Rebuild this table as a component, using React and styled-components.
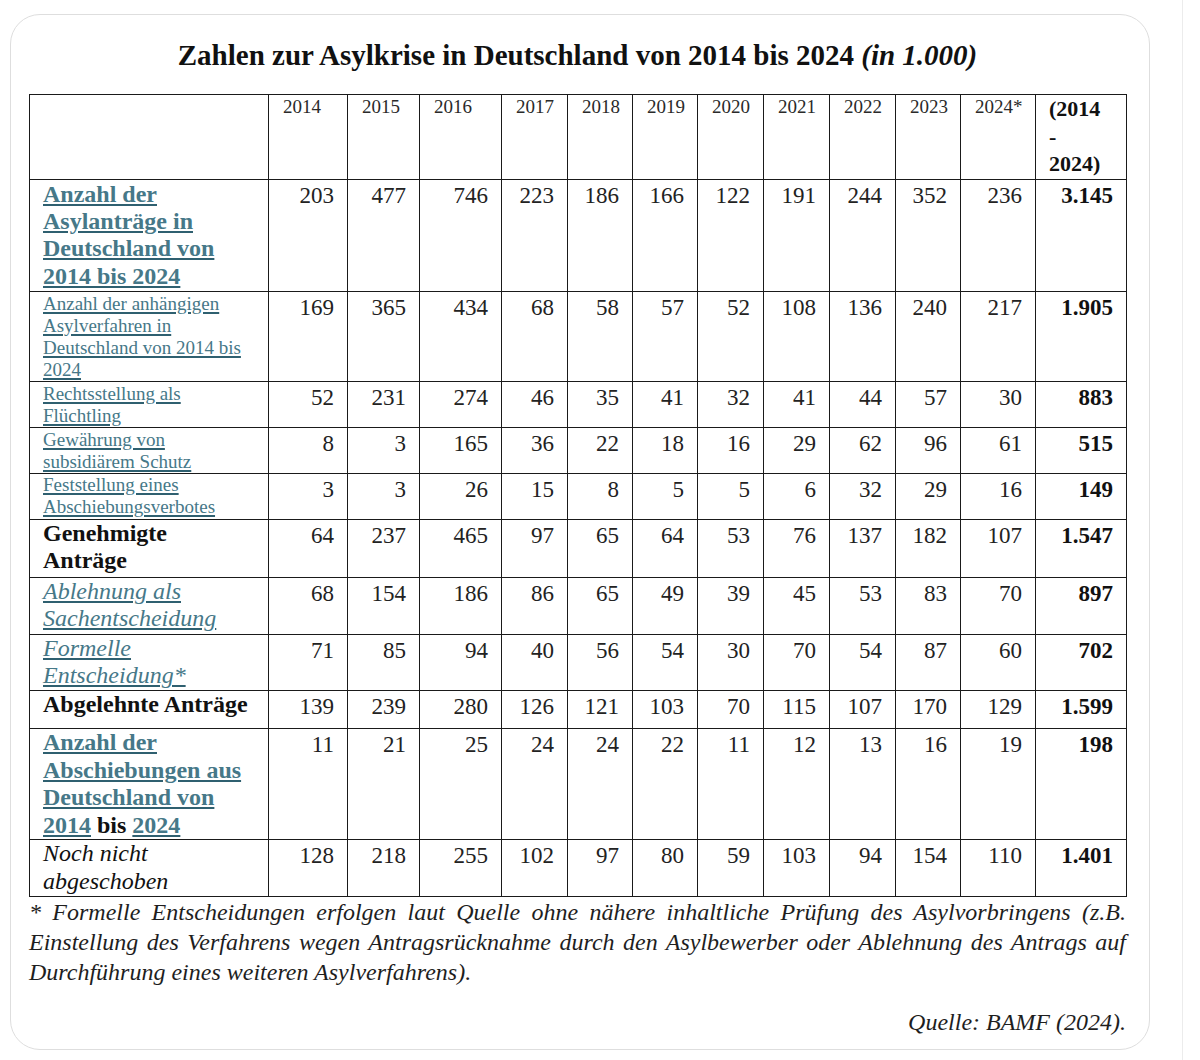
import styled, { createGlobalStyle } from "styled-components";

const GlobalStyle = createGlobalStyle`
  html, body {
    margin: 0;
    padding: 0;
    background: #ffffff;
  }
  body {
    font-family: "Liberation Serif", "Times New Roman", serif;
    color: #1a1a1a;
  }
`;

const years = ["2014", "2015", "2016", "2017", "2018", "2019", "2020", "2021", "2022", "2023", "2024*"];

const colWidths = [239, 79, 72, 82, 66, 65, 65, 66, 66, 66, 65, 75, 91];

const rows = [
  {
    kind: "main",
    h: 112,
    label: "Anzahl der Asylanträge in Deutschland von 2014 bis 2024",
    values: [203, 477, 746, 223, 186, 166, 122, 191, 244, 352, 236],
    total: "3.145",
  },
  {
    kind: "sub",
    h: 90,
    label: "Anzahl der anhängigen Asylverfahren in Deutschland von 2014 bis 2024",
    values: [169, 365, 434, 68, 58, 57, 52, 108, 136, 240, 217],
    total: "1.905",
  },
  {
    kind: "sub",
    h: 46,
    label: "Rechtsstellung als Flüchtling",
    values: [52, 231, 274, 46, 35, 41, 32, 41, 44, 57, 30],
    total: "883",
  },
  {
    kind: "sub",
    h: 45,
    label: "Gewährung von subsidiärem Schutz",
    values: [8, 3, 165, 36, 22, 18, 16, 29, 62, 96, 61],
    total: "515",
  },
  {
    kind: "sub",
    h: 46,
    label: "Feststellung eines Abschiebungsverbotes",
    values: [3, 3, 26, 15, 8, 5, 5, 6, 32, 29, 16],
    total: "149",
  },
  {
    kind: "sum",
    h: 58,
    label: "Genehmigte Anträge",
    values: [64, 237, 465, 97, 65, 64, 53, 76, 137, 182, 107],
    total: "1.547",
  },
  {
    kind: "italicLink",
    h: 57,
    label: "Ablehnung als Sachentscheidung",
    values: [68, 154, 186, 86, 65, 49, 39, 45, 53, 83, 70],
    total: "897",
  },
  {
    kind: "italicLink",
    h: 56,
    label: "Formelle Entscheidung*",
    values: [71, 85, 94, 40, 56, 54, 30, 70, 54, 87, 60],
    total: "702",
  },
  {
    kind: "sum",
    h: 38,
    label: "Abgelehnte Anträge",
    values: [139, 239, 280, 126, 121, 103, 70, 115, 107, 170, 129],
    total: "1.599",
  },
  {
    kind: "deport",
    h: 111,
    label: null,
    values: [11, 21, 25, 24, 24, 22, 11, 12, 13, 16, 19],
    total: "198",
  },
  {
    kind: "italic",
    h: 57,
    label: "Noch nicht abgeschoben",
    values: [128, 218, 255, 102, 97, 80, 59, 103, 94, 154, 110],
    total: "1.401",
  },
];

const App = () => {
  return (
    <>
      <GlobalStyle />
      <Page>
        <Card>
          <Title>
            Zahlen zur Asylkrise in Deutschland von 2014 bis 2024 <em>(in 1.000)</em>
          </Title>

          <Table>
            <colgroup>
              {colWidths.map((w, i) => (
                <col key={i} style={{ width: w }} />
              ))}
            </colgroup>
            <thead>
              <Row $h={85}>
                <HeadCell />
                {years.map((y) => (
                  <HeadCell key={y}>{y}</HeadCell>
                ))}
                <TotalHead>
                  (2014
                  <br />-<br />
                  2024)
                </TotalHead>
              </Row>
            </thead>
            <tbody>
              {rows.map((row, i) => (
                <Row key={i} $h={row.h}>
                  <LabelCell $kind={row.kind}>
                    {row.kind === "deport" ? (
                      <>
                        <LinkText>Anzahl der Abschiebungen aus Deutschland von 2014</LinkText>
                        {" bis "}
                        <LinkText>2024</LinkText>
                      </>
                    ) : row.kind === "sum" || row.kind === "italic" ? (
                      row.label
                    ) : (
                      <LinkText>{row.label}</LinkText>
                    )}
                  </LabelCell>
                  {row.values.map((v, j) => (
                    <NumCell key={j}>{v}</NumCell>
                  ))}
                  <NumCell $bold>{row.total}</NumCell>
                </Row>
              ))}
            </tbody>
          </Table>

          <Footnote>
            <FootLine $justify>
              * Formelle Entscheidungen erfolgen laut Quelle ohne nähere inhaltliche Prüfung des Asylvorbringens (z.B.
            </FootLine>
            <FootLine $justify>
              Einstellung des Verfahrens wegen Antragsrücknahme durch den Asylbewerber oder Ablehnung des Antrags auf
            </FootLine>
            <FootLine>Durchführung eines weiteren Asylverfahrens).</FootLine>
          </Footnote>

          <Source>Quelle: BAMF (2024).</Source>
        </Card>
      </Page>
    </>
  );
};

export default App;

const Page = styled.div`
  width: 1183px;
  min-height: 1060px;
  box-sizing: border-box;
  padding: 14px 0 0 10px;
  border-right: 1px solid #ececec;
`;

const Card = styled.div`
  width: 1140px;
  height: 1036px;
  box-sizing: border-box;
  border: 1px solid #dedede;
  border-radius: 30px;
  padding: 23px 23px 0 18px;
  display: flex;
  flex-direction: column;
`;

const Title = styled.h1`
  margin: 0 0 22px;
  width: 1097px;
  text-align: center;
  font-size: 29px;
  line-height: 34px;
  font-weight: bold;
  color: #111;
  white-space: nowrap;

  em {
    font-style: italic;
  }
`;

const Table = styled.table`
  width: 1097px;
  border-collapse: collapse;
  table-layout: fixed;
  border: 1px solid #1a1a1a;
`;

const Row = styled.tr`
  height: ${({ $h }) => $h}px;
`;

const Cell = styled.td`
  border: 1px solid #1a1a1a;
  vertical-align: top;
  box-sizing: border-box;
`;

const HeadCell = styled(Cell).attrs({ as: "th" })`
  padding: 1px 0 0 14px;
  text-align: left;
  font-weight: normal;
  font-size: 19px;
  line-height: 22px;
  color: #2a2a2a;
`;

const TotalHead = styled(HeadCell)`
  padding: 0 0 0 13px;
  font-weight: bold;
  font-size: 22px;
  line-height: 27.5px;
  color: #111;
`;

const labelStyles = {
  main: `
    font-size: 24px;
    line-height: 27.4px;
    font-weight: bold;
    color: #467888;
  `,
  sub: `
    font-size: 19px;
    line-height: 22px;
    color: #4f8191;
  `,
  sum: `
    font-size: 24px;
    line-height: 27.4px;
    font-weight: bold;
    color: #111;
  `,
  italicLink: `
    font-size: 24px;
    line-height: 27.4px;
    font-style: italic;
    color: #4f8191;
  `,
  deport: `
    font-size: 24px;
    line-height: 27.4px;
    font-weight: bold;
    color: #111;
  `,
  italic: `
    font-size: 24px;
    line-height: 27.4px;
    font-style: italic;
    color: #111;
  `,
};

const LabelCell = styled(Cell)`
  padding: 0.5px 18px 0 13px;
  text-align: left;
  ${({ $kind }) => labelStyles[$kind]}
`;

const LinkText = styled.span`
  color: #467888;
  text-decoration: underline;
  text-decoration-color: #2f6070;
  text-decoration-thickness: 0.09em;
  text-underline-offset: 2px;
`;

const NumCell = styled(Cell)`
  padding: 2px 13px 0 0;
  text-align: right;
  font-size: 23px;
  line-height: 28px;
  font-weight: ${({ $bold }) => ($bold ? "bold" : "normal")};
  color: ${({ $bold }) => ($bold ? "#111" : "#222")};
`;

const Footnote = styled.div`
  width: 1097px;
  font-style: italic;
  font-size: 24px;
  line-height: 30px;
  color: #1e1e1e;
`;

const FootLine = styled.div`
  text-align: ${({ $justify }) => ($justify ? "justify" : "left")};
  text-align-last: ${({ $justify }) => ($justify ? "justify" : "auto")};
  white-space: nowrap;
`;

const Source = styled.div`
  width: 1097px;
  margin-top: 20px;
  text-align: right;
  font-style: italic;
  font-size: 24px;
  line-height: 30px;
  color: #1e1e1e;
`;
